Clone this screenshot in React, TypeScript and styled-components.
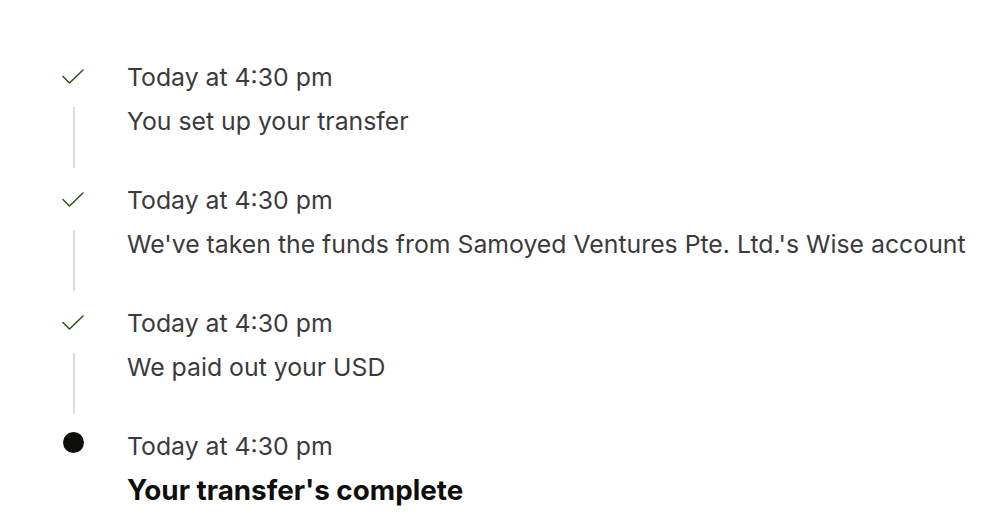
import React from 'react'
import styled, { createGlobalStyle } from 'styled-components';

const GlobalStyle = createGlobalStyle`
	html, body {
		margin: 0;
		padding: 0;
		background: #ffffff;
	}
	body {
		font-family: Inter, "Noto Sans", "Liberation Sans", sans-serif;
		-webkit-font-smoothing: antialiased;
	}
`;

const Timeline = styled.ol`
	list-style: none;
	margin: 0;
	padding: 61px 0 0 56px;
	display: flex;
	flex-direction: column;
`;

const Step = styled.li`
	display: grid;
	grid-template-columns: 34px 1fr;
	column-gap: 37px;
	padding-bottom: 47px;
	position: relative;
`;

const Rail = styled.div`
	display: flex;
	flex-direction: column;
	align-items: center;
`;

const Marker = styled.div`
	height: 32px;
	display: flex;
	align-items: center;
	justify-content: center;
`;

const Dot = styled.span`
	width: 21px;
	height: 21px;
	border-radius: 50%;
	background: #0e0f0c;
	margin-bottom: 8px;
`;

const Connector = styled.span`
	position: absolute;
	left: 17px;
	top: 46px;
	bottom: 16px;
	width: 1.5px;
	background: #dcdcdc;
`;

const Body = styled.div`
	display: flex;
	flex-direction: column;
	gap: 12px;
`;

const Time = styled.div`
	font-size: 24.8px;
	line-height: 32px;
	color: #3b3b3b;
`;

const Message = styled.div<{ $strong?: boolean }>`
	font-size: ${p => (p.$strong ? '27.8px' : '24.8px')};
	line-height: 32px;
	font-weight: ${p => (p.$strong ? 700 : 400)};
	color: ${p => (p.$strong ? '#0e0f0c' : '#3b3b3b')};
`;

const Check = () => (
	<svg width="22" height="16" viewBox="0 0 22 16" fill="none">
		<path d="M1 7.5 L7.5 14 L21 1" stroke="#2f5a12" strokeWidth="1.6" strokeLinecap="round" strokeLinejoin="round" />
	</svg>
);

type Item = { time: string; text: string; done: boolean };

const items: Item[] = [
	{ time: 'Today at 4:30 pm', text: 'You set up your transfer', done: true },
	{ time: 'Today at 4:30 pm', text: "We've taken the funds from Samoyed Ventures Pte. Ltd.'s Wise account", done: true },
	{ time: 'Today at 4:30 pm', text: 'We paid out your USD', done: true },
	{ time: 'Today at 4:30 pm', text: "Your transfer's complete", done: false },
];

const App = () => {
	return (
		<>
			<GlobalStyle />
			<Timeline>
				{items.map((item, i) => (
					<Step key={i}>
						<Rail>
							<Marker>{item.done ? <Check /> : <Dot />}</Marker>
						</Rail>
						{item.done && <Connector />}
						<Body>
							<Time>{item.time}</Time>
							<Message $strong={!item.done}>{item.text}</Message>
						</Body>
					</Step>
				))}
			</Timeline>
		</>
	)
}

export default App
